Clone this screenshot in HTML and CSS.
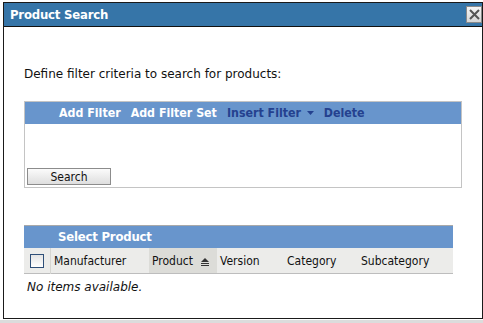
FILE: index.html
```html
<!DOCTYPE html>
<html lang="en">
<head>
    <meta charset="UTF-8">
    <title>Product Search</title>
    <link rel="stylesheet" href="styles.css">
</head>
<body>
    <div class="dialog">
        <div class="dialog-title">
            <span>Product Search</span>
            <button class="close-btn">
                <svg width="11" height="11" viewBox="0 0 11 11"><path d="M1 1 L10 10 M10 1 L1 10" stroke="#555" stroke-width="2"/></svg>
            </button>
        </div>
        <div class="dialog-body">
            <p class="intro">Define filter criteria to search for products:</p>

            <div class="filter-panel">
                <div class="filter-bar">
                    <a class="lnk-light" href="#">Add Filter</a>
                    <a class="lnk-light" href="#">Add Filter Set</a>
                    <a class="lnk-dark" href="#">Insert Filter <svg class="caret" width="7" height="4" viewBox="0 0 7 4"><path d="M0 0 H7 L3.5 4 Z" fill="#24418f"/></svg></a>
                    <a class="lnk-dark" href="#">Delete</a>
                </div>
                <div class="filter-area"></div>
                <button class="search-btn">Search</button>
            </div>

            <div class="grid">
                <div class="grid-title">Select Product</div>
                <table class="grid-head">
                    <tr>
                        <th class="col-check"><span class="checkbox"></span></th>
                        <th class="col-man">Manufacturer</th>
                        <th class="col-prod sorted">Product <svg class="sort" width="8" height="8" viewBox="0 0 8 8"><path d="M4 0 L8 4 H0 Z" fill="#333"/><rect x="0" y="5" width="8" height="1" fill="#333"/><rect x="0" y="7" width="8" height="1" fill="#333"/></svg></th>
                        <th class="col-ver">Version</th>
                        <th class="col-cat">Category</th>
                        <th class="col-sub">Subcategory</th>
                    </tr>
                </table>
                <div class="no-items">No items available.</div>
            </div>
        </div>
    </div>
    <div class="page-bottom"></div>
</body>
</html>
```

FILE: styles.css
```css
body {
    margin: 0;
    background: #ffffff;
    font-family: "DejaVu Sans", sans-serif;
    font-size: 12px;
    color: #111;
}

.dialog {
    margin: 2px 0 0 3px;
    width: 480px;
    height: 317px;
    box-sizing: border-box;
    border: 1px solid #1a1a1a;
    background: #fff;
}

.dialog-title {
    height: 23px;
    border-bottom: 1px solid #111;
    background-color: #3675a8;
    color: #fff;
    font-family: "DejaVu Sans Condensed", "DejaVu Sans", sans-serif;
    font-weight: bold;
    font-size: 13px;
    letter-spacing: -0.2px;
    display: flex;
    align-items: center;
    justify-content: space-between;
    padding: 0 0 0 6px;
}

.close-btn {
    width: 16px;
    height: 17px;
    margin-right: 0;
    padding: 0;
    border: 1px solid #8a8a8a;
    background: linear-gradient(#f6f6f6, #d6d6d6);
    display: flex;
    align-items: center;
    justify-content: center;
}

.dialog-body {
    padding: 40px 20px 0 20px;
}

.intro {
    margin: 0;
    line-height: 14px;
}

.filter-panel {
    margin-top: 20px;
    width: 438px;
    box-sizing: border-box;
    border: 1px solid #c4c4c4;
    padding-bottom: 2px;
}

.filter-bar {
    height: 22px;
    background-color: #6895cc;
    display: flex;
    align-items: center;
    padding-left: 34px;
    gap: 10px;
    font-family: "DejaVu Sans Condensed", "DejaVu Sans", sans-serif;
    font-weight: bold;
    font-size: 12.3px;
}

.filter-bar a {
    text-decoration: none;
}

.lnk-light {
    color: #fff;
}

.lnk-dark {
    color: #24418f;
}

.caret {
    margin-left: 2px;
    vertical-align: 2px;
}

.filter-area {
    height: 44px;
}

.search-btn {
    display: block;
    margin-left: 2px;
    width: 84px;
    height: 17px;
    padding: 0;
    border: 1px solid #8c8c8c;
    background: linear-gradient(#fbfbfb, #dedede);
    font-family: "DejaVu Sans Condensed", "DejaVu Sans", sans-serif;
    font-size: 12px;
    color: #111;
    line-height: 14px;
}

.grid {
    margin-top: 37px;
    width: 429px;
}

.grid-title {
    height: 22px;
    border-top: 1px solid #a9a9a9;
    background-color: #6895cc;
    color: #fff;
    font-family: "DejaVu Sans Condensed", "DejaVu Sans", sans-serif;
    font-weight: bold;
    font-size: 13px;
    letter-spacing: -0.2px;
    line-height: 22px;
    padding-left: 34px;
}

.grid-head {
    width: 100%;
    border-collapse: collapse;
    background: #ececea;
    border-bottom: 1px solid #bdbdbd;
}

.grid-head th {
    height: 25px;
    padding: 0 0 0 3px;
    text-align: left;
    font-weight: normal;
    font-family: "DejaVu Sans Condensed", "DejaVu Sans", sans-serif;
    font-size: 12px;
}

.col-check {
    width: 23px;
    border-right: 1px solid #d6d6d2;
}

.checkbox {
    display: block;
    width: 12px;
    height: 12px;
    margin-left: 3px;
    border: 1px solid #2f4f78;
    background: linear-gradient(#e4e4e4, #ffffff);
}

.col-man { width: 95px; }
.col-prod { width: 65px; }
.col-ver { width: 64px; }
.col-cat { width: 71px; }

.sorted {
    background: #dcdcd8;
}

.sort {
    margin-left: 5px;
    vertical-align: -1px;
}

.no-items {
    font-style: italic;
    padding: 6px 0 0 3px;
}

.page-bottom {
    height: 4px;
    background: #dcdcdc;
    margin-top: 1px;
}
```
